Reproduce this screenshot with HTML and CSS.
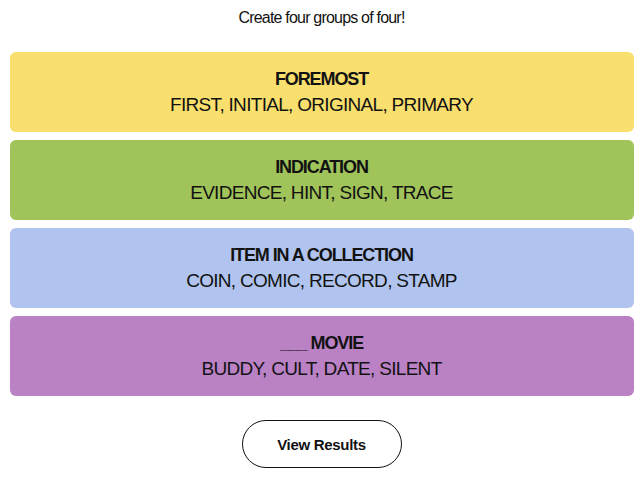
FILE: index.html
```html
<!DOCTYPE html>
<html lang="en">
<head>
    <meta charset="UTF-8">
    <meta name="viewport" content="width=device-width, initial-scale=1.0">
    <title>Connections</title>
    <link rel="stylesheet" href="styles.css">
</head>
<body>

    <p class="prompt">Create four groups of four!</p>

    <div class="board">
        <div class="group yellow">
            <h3>FOREMOST</h3>
            <p>FIRST, INITIAL, ORIGINAL, PRIMARY</p>
        </div>
        <div class="group green">
            <h3>INDICATION</h3>
            <p>EVIDENCE, HINT, SIGN, TRACE</p>
        </div>
        <div class="group blue">
            <h3>ITEM IN A COLLECTION</h3>
            <p>COIN, COMIC, RECORD, STAMP</p>
        </div>
        <div class="group purple">
            <h3>___ MOVIE</h3>
            <p>BUDDY, CULT, DATE, SILENT</p>
        </div>
    </div>

    <div class="controls">
        <button class="results">View Results</button>
    </div>

</body>
</html>
```

FILE: styles.css
```css
body{
    margin: 0;
    background: #fff;
    color: #121212;
    font-family: "Liberation Sans", Arial, sans-serif;
}

.prompt{
    margin: 0;
    padding-top: 9px;
    height: 52px;
    box-sizing: border-box;
    text-align: center;
    font-size: 16px;
    letter-spacing: -0.8px;
}

.board{
    display: flex;
    flex-direction: column;
    gap: 8px;
    width: 624px;
    margin: 0 auto;
}

.group{
    height: 80px;
    border-radius: 6px;
    display: flex;
    flex-direction: column;
    align-items: center;
    justify-content: center;
    text-align: center;
}

.group h3{
    margin: 0;
    font-size: 18px;
    font-weight: bold;
    letter-spacing: -1.1px;
    line-height: 25px;
}

.group p{
    margin: 0;
    font-size: 19px;
    letter-spacing: -0.7px;
    line-height: 25px;
}

.yellow{ background: #f9df6d; }
.green{ background: #a0c35a; }
.blue{ background: #b0c4ef; }
.purple{ background: #ba81c5; }

.controls{
    display: flex;
    justify-content: center;
    padding-top: 24px;
}

.results{
    width: 160px;
    height: 48px;
    border: 1px solid #121212;
    border-radius: 24px;
    background: #fff;
    color: #121212;
    font-family: "Liberation Sans", Arial, sans-serif;
    font-size: 15px;
    font-weight: 600;
    letter-spacing: -0.3px;
}
```
